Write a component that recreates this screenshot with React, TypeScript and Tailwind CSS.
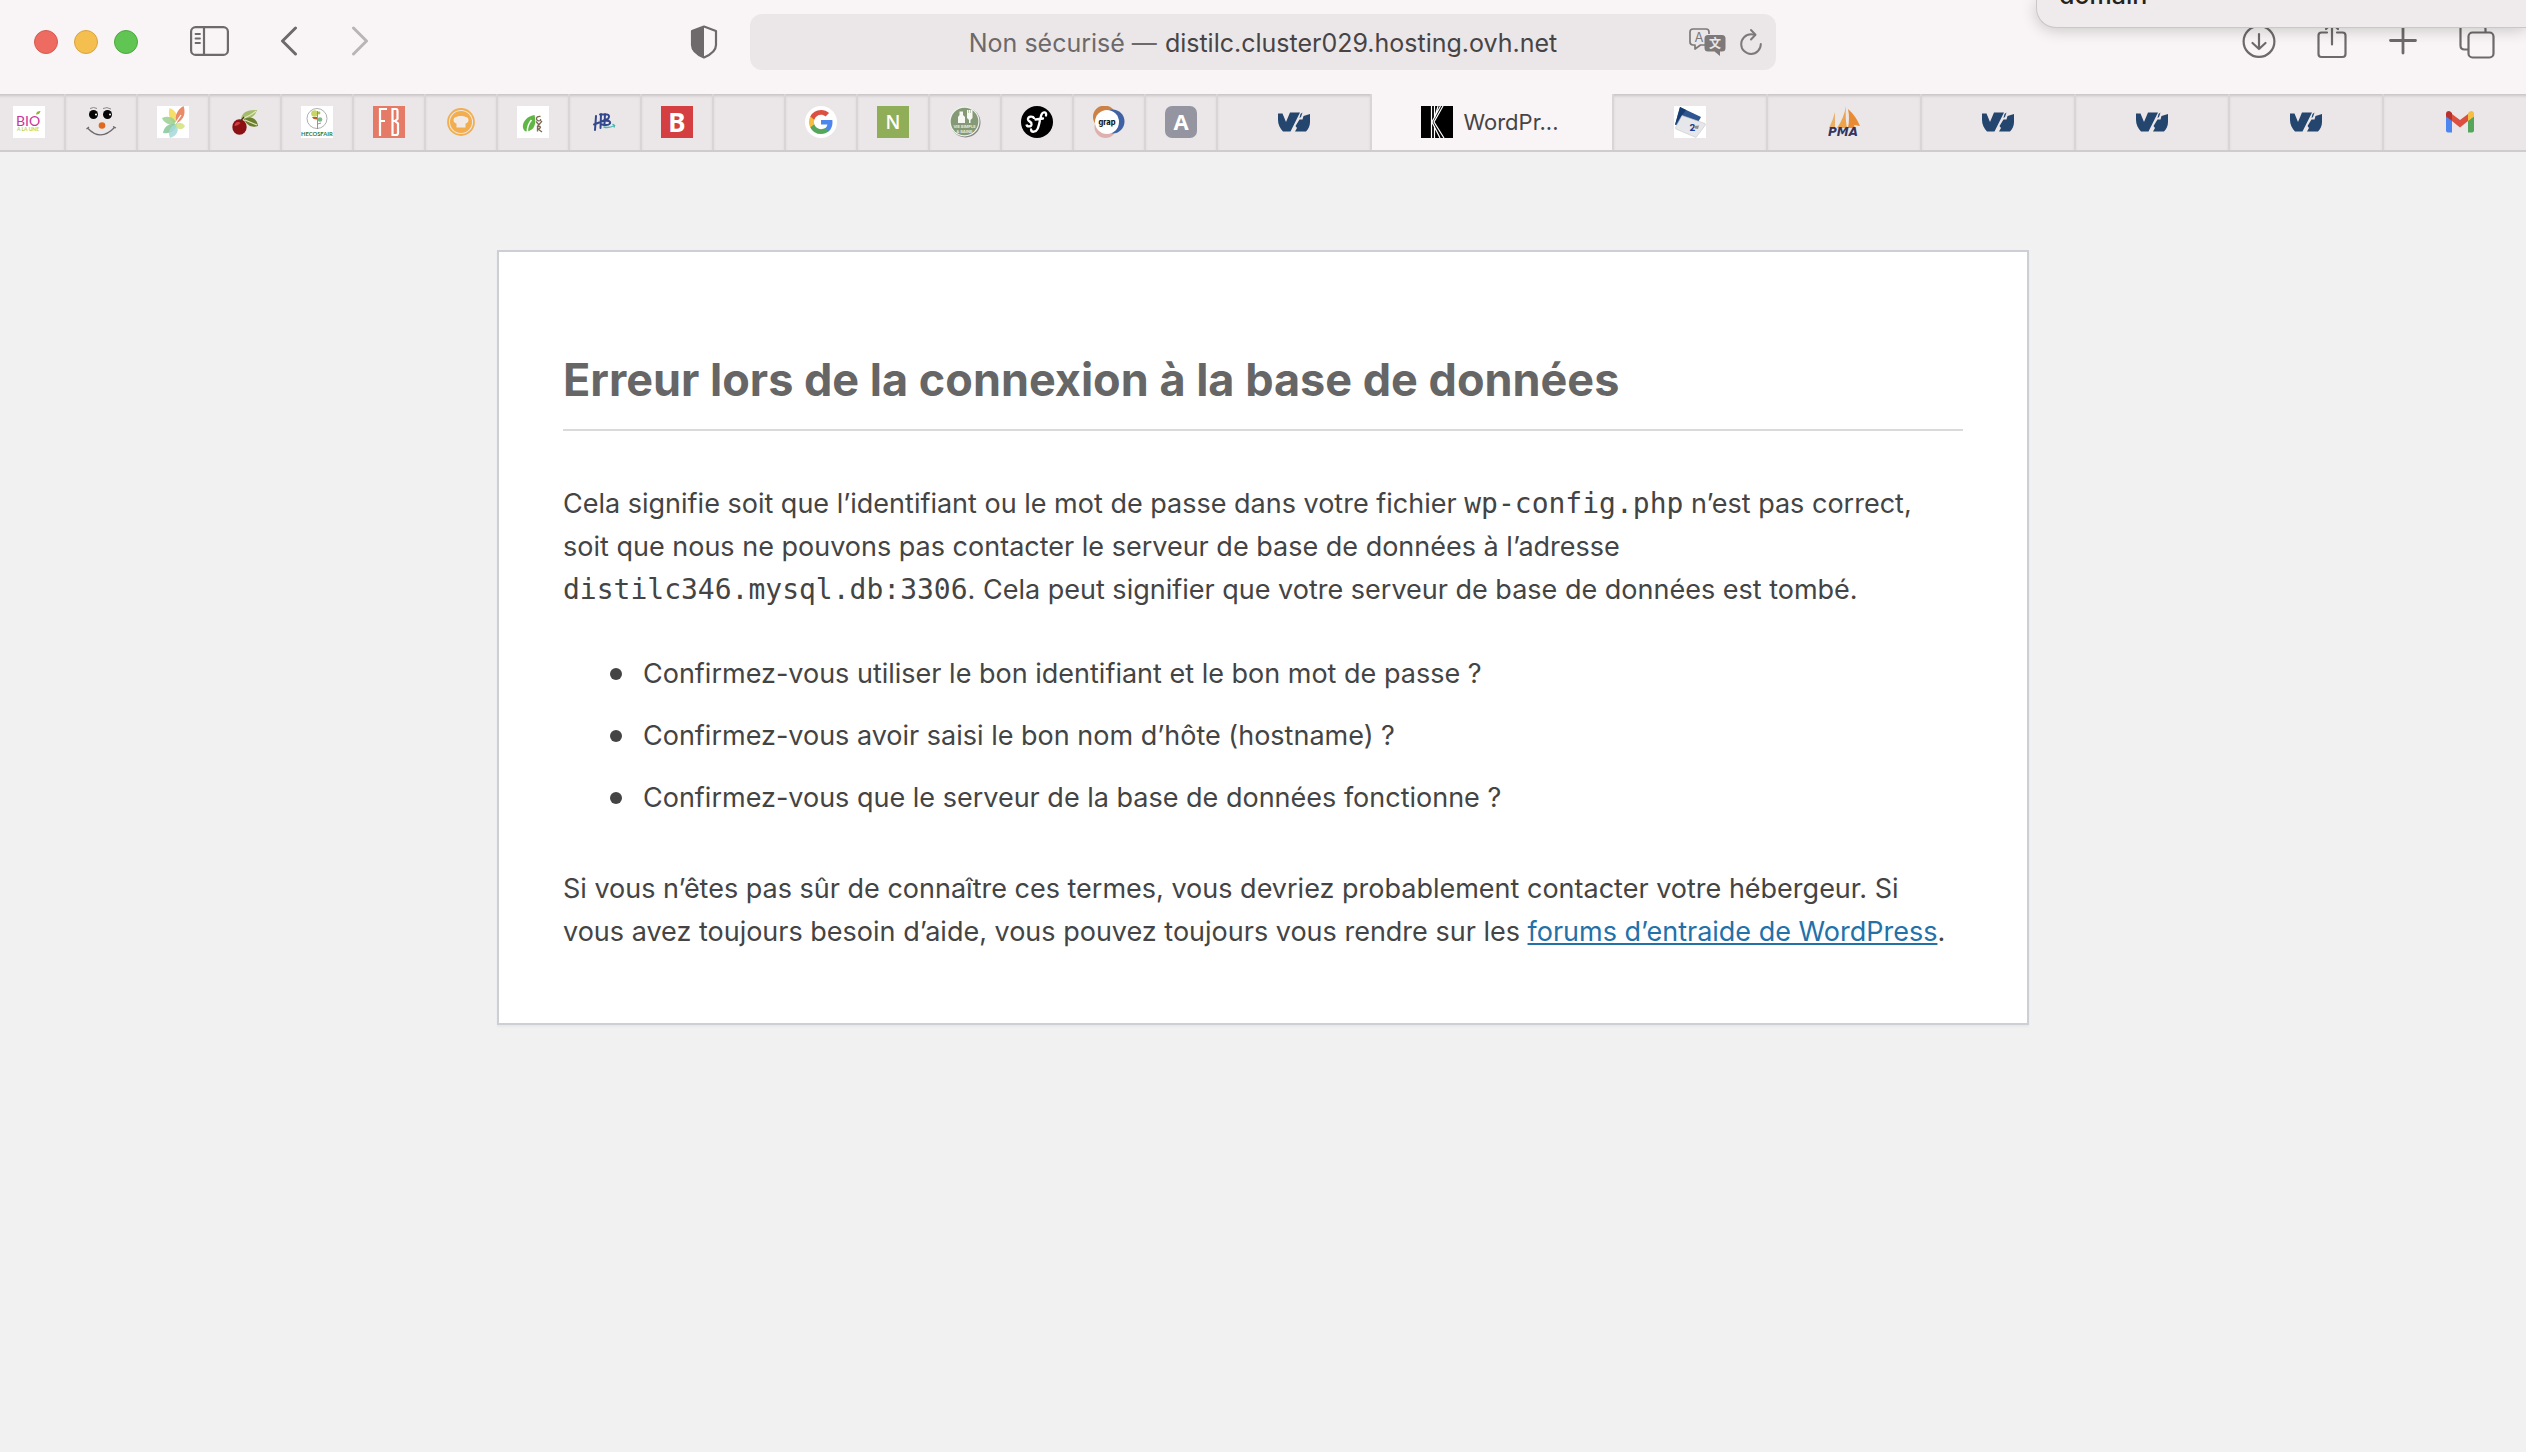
import type { ReactNode } from 'react';

interface Tab {
  id: string;
  label: string;
  icon?: ReactNode;
}

function Favicon({ children }: { children: ReactNode }) {
  return (
    <svg viewBox="0 0 32 32" className="size-8 shrink-0" aria-hidden="true">
      {children}
    </svg>
  );
}

const ovhIcon = (
  <Favicon>
    <path d="M0 7.500 L4.500 7.500 L8 16 L12 6.500 L22 6.500 L12.500 25.500 L5 25.500 C2 22.500 0 18.500 0 14 Z" fill="#24456e" />
    <path d="M22.500 8 L24.500 6.500 L23 11 L21.500 12 Z M25.500 10 L32 8 L32 16 C32 20 30.500 23 28 25.500 L17 25.500 L19 22 L17.500 20 L21.500 13.500 L24.500 13.500 Z" fill="#24456e" />
  </Favicon>
);

const pinnedTabs: Tab[] = [
  {
    id: 'bio',
    label: 'Bio à la une',
    icon: (
      <Favicon>
        <rect width="32" height="32" fill="#fff" />
        <text x="3" y="19.500" fontSize="14" fontFamily="Lato, sans-serif" fill="#c8359b">BIO</text>
        <path d="M23 8.500 C23 6 25 5 27.500 5 C27 7.500 25.500 8.500 23 8.500" fill="#8cb42e" />
        <text x="4" y="25" fontSize="5" fontFamily="Lato, sans-serif" fontWeight="700" fill="#c2cf4c">A LA UNE</text>
      </Favicon>
    ),
  },
  {
    id: 'face',
    label: 'Sourire',
    icon: (
      <Favicon>
        <circle cx="8.500" cy="8.500" r="4.500" fill="#050505" />
        <circle cx="22.500" cy="8.500" r="4.500" fill="#050505" />
        <circle cx="11" cy="8.500" r="1" fill="#fff" />
        <circle cx="25" cy="8.500" r="1" fill="#fff" />
        <path d="M5 2.500 Q8.500 .5 12 2.500 M18 2.500 Q22 .5 26 3" fill="none" stroke="#8a8788" strokeWidth="1" />
        <circle cx="17" cy="19.500" r="3.300" fill="#e0681f" />
        <path d="M2.500 22 Q15.500 36 29.500 21.500 M1.500 23 L4 21 M28 20.500 L31 22" fill="none" stroke="#6c696a" strokeWidth="1.200" />
      </Favicon>
    ),
  },
  {
    id: 'leaves',
    label: 'Feuilles',
    icon: (
      <Favicon>
        <rect width="32" height="32" fill="#fff" />
        <path d="M12.500 2 C20 5 22 11 18 18 C12 14 11 8 12.500 2" fill="#f5df6a" />
        <path d="M26.500 0 C29 7 27 13 20 17 C17 10 20 4 26.500 0" fill="#ea8a68" />
        <path d="M5 12 C12 9 18 12 20 18 C12 20 7 17 5 12" fill="#9bcf92" fillOpacity=".85" />
        <path d="M6 27 C7 20 13 17 20 18 C18 26 12 28 6 27" fill="#86c796" fillOpacity=".85" />
        <path d="M13 32 C10 25 14 20 19 18 C23 24 20 30 13 32" fill="#a5d8da" fillOpacity=".85" />
        <path d="M28 20 C25 25 21 24 18 19 C21 16 25 16 28 20" fill="#d3e07c" fillOpacity=".85" />
        <path d="M18 18 L24 9" stroke="#fff" strokeWidth="1.300" />
      </Favicon>
    ),
  },
  {
    id: 'cherry',
    label: 'Cerise',
    icon: (
      <Favicon>
        <path d="M12 13 C13 6 19 3.500 28 4 C26 11 20 14 12 13.500 Z" fill="#a3bb6b" />
        <path d="M15 13 C21 9.500 28 12 29 20 C23 22 18 20 15 13" fill="#6b7d2e" />
        <path d="M13 12.500 Q20 11 27 5 M16 14 L28 19" stroke="#e0e7bb" strokeWidth="1.200" fill="none" />
        <ellipse cx="10.500" cy="21" rx="7.200" ry="7.800" fill="#8c1113" />
        <path d="M5.500 20 C5.500 16 9.500 15 11.500 17 C9.500 19 7.500 20 5.500 20" fill="#d14040" />
        <path d="M11.500 15 L15 11" stroke="#4d3215" strokeWidth="1.200" />
      </Favicon>
    ),
  },
  {
    id: 'hecosfair',
    label: 'Hecosfair',
    icon: (
      <Favicon>
        <rect width="32" height="32" fill="#fff" />
        <circle cx="16" cy="12.500" r="10" fill="none" stroke="#9a9a9a" strokeWidth=".8" />
        <circle cx="13.500" cy="7.500" r="3.300" fill="#c9d663" />
        <circle cx="19" cy="13.500" r="2.300" fill="#7fb98a" />
        <circle cx="18" cy="7" r="1.400" fill="#a8bf55" />
        <path d="M11 11 L16 11 L16 13.500 Q12 13.500 11 11" fill="#c05a2e" />
        <path d="M16.500 5 V23 M16.500 18 L20 17" stroke="#8f8a7c" strokeWidth=".9" fill="none" />
        <text x="0" y="30" fontSize="5.800" fontFamily="Lato, sans-serif" fontWeight="700" fill="#1f7a4a">HECOSFAIR</text>
      </Favicon>
    ),
  },
  {
    id: 'fb',
    label: 'FB',
    icon: (
      <Favicon>
        <rect width="32" height="32" fill="#e57b66" />
        <path d="M7 30 V3 H14 M7 15 H12" fill="none" stroke="#fff" strokeWidth="2.200" />
        <path d="M19.500 29 V3 H23 Q24.500 3 24.500 5 V13 L22 15 L25 17.500 V27 Q25 29 23 29 Z M19.500 15 H22" fill="none" stroke="#fff" strokeWidth="2.200" />
      </Favicon>
    ),
  },
  {
    id: 'chef',
    label: 'Cuisine',
    icon: (
      <Favicon>
        <circle cx="16" cy="16" r="13" fill="none" stroke="#f2ae4e" strokeWidth="1.800" />
        <circle cx="16" cy="16" r="11" fill="#f2ae4e" />
        <path d="M11.500 21.500 V17.500 C7.500 17 7.500 11 11.500 11 C13 9.800 19 9.800 20.500 11 C24.500 11 24.500 17 20.500 17.500 V21.500 Z" fill="#f1eae6" />
      </Favicon>
    ),
  },
  {
    id: 'gyr',
    label: 'GYR',
    icon: (
      <Favicon>
        <rect width="32" height="32" fill="#fff" />
        <path d="M17.500 9 C19.500 17 18 25 9 25.500 C3 23 5.500 11 17.500 9" fill="#5fb644" />
        <path d="M14.500 14 C11 18 10 21 10.500 26" stroke="#fff" strokeWidth="1.500" fill="none" />
        <path d="M23.500 10.500 Q19.500 10 19.500 13 Q20 15.500 23.500 14.500 V13 M19 15.500 L22 19 M25 15 L20 21 M20.500 25.500 V20.500 H23 Q24.500 22 21 23 L25 26" stroke="#7d6a55" strokeWidth="1.300" fill="none" />
      </Favicon>
    ),
  },
  {
    id: 'hb',
    label: 'HB',
    icon: (
      <Favicon>
        <path d="M7 10 L6 24 M12 8 L11.500 22 M5 18.500 L14 15 M11 8.500 H18 Q21.500 9 19 13 L14 14.500 Q22 14 21 17.500 Q19 20 13 18.500 M16 8 L15.500 18" fill="none" stroke="#33478f" strokeWidth="2" strokeLinecap="round" />
        <path d="M14.500 21 Q20 22.500 25.500 19.500 L23.500 18 M25.500 19.500 L25 21.500" fill="none" stroke="#4bb7b1" strokeWidth="1.300" />
      </Favicon>
    ),
  },
  {
    id: 'b',
    label: 'B',
    icon: (
      <Favicon>
        <rect width="32" height="32" fill="#d44042" />
        <text x="16" y="25.500" fontSize="26" textAnchor="middle" fontFamily="Noto Sans, sans-serif" fontWeight="700" fill="#fff">B</text>
      </Favicon>
    ),
  },
  { id: 'blank', label: 'Onglet vide' },
  {
    id: 'google',
    label: 'Google',
    icon: (
      <Favicon>
        <circle cx="16" cy="16" r="16" fill="#fff" />
        <g transform="translate(4 4)">
          <path d="M23.500 12.270c0-.820-.070-1.600-.2-2.350H12v4.620h6.460a5.530 5.530 0 0 1-2.400 3.630v3h3.870c2.270-2.090 3.570-5.170 3.570-8.900z" fill="#4c86ee" />
          <path d="M12 24c3.240 0 5.960-1.070 7.940-2.910l-3.870-3c-1.080.720-2.450 1.160-4.070 1.160-3.130 0-5.780-2.110-6.730-4.960H1.280v3.100A12 12 0 0 0 12 24z" fill="#55a55b" />
          <path d="M5.270 14.290a7.200 7.200 0 0 1 0-4.580V6.610H1.280a12 12 0 0 0 0 10.780z" fill="#f5bd42" />
          <path d="M12 4.750c1.770 0 3.350.610 4.600 1.800l3.430-3.430C17.950 1.190 15.240 0 12 0A12 12 0 0 0 1.280 6.610l3.990 3.100C6.220 6.860 8.870 4.750 12 4.750z" fill="#db5040" />
        </g>
      </Favicon>
    ),
  },
  {
    id: 'n',
    label: 'N',
    icon: (
      <Favicon>
        <rect width="32" height="32" fill="#90ae58" />
        <text x="16" y="23" fontSize="19" textAnchor="middle" fontFamily="Open Sans, sans-serif" fontWeight="600" fill="#fff">N</text>
      </Favicon>
    ),
  },
  {
    id: 'vie-simple',
    label: 'Vie simple & saine',
    icon: (
      <Favicon>
        <circle cx="16.500" cy="16.500" r="15" fill="#858585" />
        <circle cx="15.500" cy="15.500" r="15" fill="#f3f3ef" />
        <circle cx="15.500" cy="15.500" r="13.800" fill="#849a76" />
        <path d="M10.500 5.500 H14 V9 L16 11 V17 H9 V11 L10.500 9 Z M18 4 H19.500 V7 H20 V4 H21.500 V7 H22 V4 H23.500 V12 L21.500 14 V17 H20 V14 L18 12 Z" fill="#f7f7f3" />
        <text x="15.500" y="22" fontSize="4" textAnchor="middle" fontFamily="Inter, sans-serif" fontWeight="700" fill="#e6e9e0">VIE SIMPLE</text>
        <text x="15.500" y="26.500" fontSize="4" textAnchor="middle" fontFamily="Inter, sans-serif" fontWeight="700" fill="#e6e9e0">& SAINE</text>
      </Favicon>
    ),
  },
  {
    id: 'symfony',
    label: 'Symfony',
    icon: (
      <Favicon>
        <circle cx="16" cy="16" r="16" fill="#000" />
        <path d="M13 13 C13 9.500 6.500 10 7 13.500 C7.500 16 11 15.500 10.500 18.500 C10 21 6 21 5.500 18.500" fill="none" stroke="#fff" strokeWidth="2.400" />
        <path d="M25 9.500 C26 6 22 5 20.500 8.500 C19 12 18.500 19 16.500 23 C15 26 10.500 27 10 23.500 M14.500 13.500 L22 12.500" fill="none" stroke="#fff" strokeWidth="2.300" strokeLinecap="round" />
      </Favicon>
    ),
  },
  {
    id: 'grap',
    label: 'Grap',
    icon: (
      <Favicon>
        <circle cx="11.500" cy="11" r="11.500" fill="#cc8246" />
        <circle cx="12.500" cy="21" r="11" fill="#deb0ae" />
        <circle cx="19.500" cy="15.500" r="12" fill="#3f62a5" />
        <circle cx="14" cy="16" r="12" fill="#fff" />
        <text x="14" y="18.500" fontSize="7.500" textAnchor="middle" fontFamily="Inter, sans-serif" fontWeight="800" fill="#151515">grap</text>
      </Favicon>
    ),
  },
  {
    id: 'a',
    label: 'A',
    icon: (
      <Favicon>
        <rect width="32" height="32" rx="7" fill="#9495a0" />
        <text x="16" y="24" fontSize="22" textAnchor="middle" fontFamily="Open Sans, sans-serif" fontWeight="700" fill="#fff">A</text>
      </Favicon>
    ),
  },
];

const archiveIcon = (
  <Favicon>
    <rect width="32" height="32" fill="#fff" />
    <path d="M6 1 L27 11 L23 18 L1 19 Z" fill="#2f5590" />
    <path d="M6 1 L12 4 L1 19 Z" fill="#173c72" />
    <path d="M8 9.500 L31 17.500 Q32 18 31 19.500 L22 31.500 L2 23 Q1 22 2 20.500 Z" fill="#e6e7ea" stroke="#c5c6ca" strokeWidth=".6" />
    <text x="15.500" y="24.500" fontSize="9" fontFamily="Inter, sans-serif" fontWeight="800" fill="#1c3c8c">2</text>
    <path d="M20 20 L25 19.500 L24 23 L21 22.500 Z" fill="#8d8e93" />
  </Favicon>
);

const pmaIcon = (
  <Favicon>
    <path d="M7 6 V22 H1 Q5 14 7 6" fill="#eab06a" />
    <path d="M18 0 Q17 12 19 22 H9 Q16 12 18 0" fill="#eda24c" />
    <path d="M20 3 Q28 10 32 20 L26 19 L27 22 H20 Q22 12 20 3" fill="#e98b32" />
    <text x="0" y="30" fontSize="12" fontFamily="DejaVu Sans, sans-serif" fontWeight="700" fontStyle="italic" fill="#34345f">PMA</text>
  </Favicon>
);

const gmailIcon = (
  <Favicon>
    <path d="M2 10 L8 14.500 V26.500 H4 Q2 26.500 2 24.500 Z" fill="#4c86ee" />
    <path d="M30 10 L24 14.500 V26.500 H28 Q30 26.500 30 24.500 Z" fill="#55a55b" />
    <path d="M8 8 L16 14 L24 8 V15 L16 21.500 L8 15 Z" fill="#db5040" />
    <path d="M2 8 Q2 5 5 5 Q6 5 8 7 V15 L2 10.500 Z" fill="#b8312c" />
    <path d="M30 8 Q30 5 27 5 Q26 5 24 7 V15 L30 10.500 Z" fill="#f5bd42" />
  </Favicon>
);

const wideTabs: Tab[] = [
  { id: 'archive', label: 'Archive', icon: archiveIcon },
  { id: 'pma', label: 'phpMyAdmin', icon: pmaIcon },
  { id: 'ovh-2', label: 'OVH', icon: ovhIcon },
  { id: 'ovh-3', label: 'OVH', icon: ovhIcon },
  { id: 'ovh-4', label: 'OVH', icon: ovhIcon },
  { id: 'gmail', label: 'Gmail', icon: gmailIcon },
];

const checks = [
  'Confirmez-vous utiliser le bon identifiant et le bon mot de passe ?',
  'Confirmez-vous avoir saisi le bon nom d’hôte (hostname) ?',
  'Confirmez-vous que le serveur de la base de données fonctionne ?',
];

const inactiveTab = 'flex items-center justify-center border-r-2 border-[#d9d5d6] bg-[#ebe7e8] shadow-[inset_0_3px_3px_-1px_#c8c4c5]';

function Toolbar() {
  return (
    <header className="grid h-[94px] grid-cols-[minmax(0,1fr)_minmax(0,1026px)_minmax(0,1fr)] pt-3.5">
      <div className="flex h-14 items-center pr-8 pl-[34px] text-[#6e696a]">
        <div className="flex gap-4">
          <button type="button" aria-label="Fermer" className="size-6 rounded-full border border-[#d65a50] bg-[#ed6b60]" />
          <button type="button" aria-label="Réduire" className="size-6 rounded-full border border-[#d9a33e] bg-[#f5bf4f]" />
          <button type="button" aria-label="Agrandir" className="size-6 rounded-full border border-[#4fa73f] bg-[#61c554]" />
        </div>
        <button type="button" aria-label="Barre latérale" className="ml-[52px]">
          <svg viewBox="0 0 40 32" className="h-8 w-10" fill="none" stroke="currentColor" strokeWidth="2.200">
            <rect x="1.100" y="1.100" width="36.800" height="27.800" rx="4.500" />
            <path d="M14 1 V29" />
            <path d="M5.500 8 H10 M5.500 12.500 H10 M5.500 17 H10" strokeWidth="1.800" strokeLinecap="round" />
          </svg>
        </button>
        <button type="button" aria-label="Précédent" className="ml-[50px]">
          <svg viewBox="0 0 18 32" className="h-8 w-[18px]" fill="none" stroke="currentColor" strokeWidth="3" strokeLinecap="round" strokeLinejoin="round">
            <path d="M15.500 2 L2.500 15 L15.500 28" />
          </svg>
        </button>
        <button type="button" aria-label="Suivant" className="ml-[53px] text-[#b9b5b6]">
          <svg viewBox="0 0 18 32" className="h-8 w-[18px]" fill="none" stroke="currentColor" strokeWidth="3" strokeLinecap="round" strokeLinejoin="round">
            <path d="M2.500 2 L15.500 15 L2.500 28" />
          </svg>
        </button>
        <button type="button" aria-label="Rapport de confidentialité" className="ml-auto">
          <svg viewBox="0 0 28 34" className="h-[34px] w-7">
            <path d="M14 1.500 L26 6 V20 Q26 27.500 14 32.500 Q2 27.500 2 20 V6 Z" fill="none" stroke="currentColor" strokeWidth="2.200" strokeLinejoin="round" />
            <path d="M14 1.500 V32.500 Q2 27.500 2 20 V6 Z" fill="currentColor" />
          </svg>
        </button>
      </div>

      <div className="relative flex h-14 items-center justify-center gap-2 rounded-xl bg-[#ebe7e8] pt-1 text-[25px]">
        <label htmlFor="address" className="text-[#6d696a]">Non sécurisé —</label>
        <input id="address" type="text" defaultValue="distilc.cluster029.hosting.ovh.net" className="field-sizing-content bg-transparent text-[#474445] outline-none" />
        <div className="absolute inset-y-0 right-3.5 flex items-center gap-3.5 text-[#7d797a]">
          <button type="button" aria-label="Traduire">
            <svg viewBox="0 0 38 30" className="h-[30px] w-[38px]">
              <path d="M17 18 H12.500 L7 22 V18 H5 Q2 18 2 15 V5 Q2 2 5 2 H18 Q21 2 21 5 V7" fill="none" stroke="currentColor" strokeWidth="1.700" strokeLinejoin="round" />
              <text x="6.500" y="15" fontSize="13" fontFamily="Inter, sans-serif" fill="currentColor">A</text>
              <path d="M20 8 H34 Q37.500 8 37.500 11.500 V21 Q37.500 24.500 34 24.500 H32 V29 L26.500 24.500 H20 Q16.500 24.500 16.500 21 V11.500 Q16.500 8 20 8 Z" fill="currentColor" />
              <text x="27" y="20.500" fontSize="12" textAnchor="middle" fontFamily="Noto Sans CJK SC, sans-serif" fontWeight="700" fill="#ebe7e8">文</text>
            </svg>
          </button>
          <button type="button" aria-label="Actualiser">
            <svg viewBox="0 0 22 28" className="h-7 w-[22px]" fill="none" stroke="currentColor" strokeWidth="2" strokeLinecap="round" strokeLinejoin="round">
              <path d="M15 6.800 Q13 6.300 11 6.300 A9.800 9.800 0 1 0 20.800 16" />
              <path d="M11 2 L15.500 6.800 L11 11.500" />
            </svg>
          </button>
        </div>
      </div>

      <div className="flex h-14 items-center justify-end pr-[31px] text-[#6e696a]">
        <button type="button" aria-label="Téléchargements">
          <svg viewBox="0 0 34 34" className="size-[34px]" fill="none" stroke="currentColor" strokeWidth="2.200" strokeLinecap="round" strokeLinejoin="round">
            <circle cx="17" cy="16.500" r="15.400" />
            <path d="M17 9 V24 M10.500 18 L17 24 L23.500 18" />
          </svg>
        </button>
        <button type="button" aria-label="Partager" className="ml-[41px]">
          <svg viewBox="0 0 30 42" className="h-[42px] w-[30px]" fill="none" stroke="currentColor" strokeWidth="2.200" strokeLinecap="round" strokeLinejoin="round">
            <path d="M10 11.500 H4.500 Q1.500 11.500 1.500 14.500 V33 Q1.500 36 4.500 36 H25.500 Q28.500 36 28.500 33 V14.500 Q28.500 11.500 25.500 11.500 H20" />
            <path d="M15 23.500 V2 M9 8 L15 2 L21 8" />
          </svg>
        </button>
        <button type="button" aria-label="Nouvel onglet" className="ml-[42px]">
          <svg viewBox="0 0 28 32" className="h-8 w-7" fill="none" stroke="currentColor" strokeWidth="2.800" strokeLinecap="round">
            <path d="M14 1.500 V27 M1.500 14.500 H26.500" />
          </svg>
        </button>
        <button type="button" aria-label="Tous les onglets" className="ml-[42px]">
          <svg viewBox="0 0 36 36" className="size-9" fill="none" stroke="currentColor" strokeWidth="2.200">
            <path d="M9.500 25.500 H5.500 Q1.500 25.500 1.500 21.500 V4 Q1.500 1.500 5 1.500 H22 Q26.500 1.500 26.500 5 V8" />
            <rect x="9.500" y="8.500" width="25" height="25" rx="4" />
          </svg>
        </button>
      </div>
    </header>
  );
}

function TabBar() {
  return (
    <nav aria-label="Onglets" className="overflow-hidden border-b-2 border-[#cfcccd]">
      <div className="-mr-3 -ml-1.5 flex h-14">
        {pinnedTabs.map((tab) => (
          <button key={tab.id} type="button" aria-label={tab.label} className={`${inactiveTab} w-[72px] shrink-0`}>{tab.icon}</button>
        ))}
        <button type="button" aria-label="OVH" className={`${inactiveTab} min-w-0 flex-1`}>{ovhIcon}</button>
        <button type="button" className="flex w-[242px] shrink-0 items-center justify-center gap-2.5 border-r-2 border-[#d9d5d6] pr-1 text-[22px] text-[#474445]">
          <Favicon>
            <rect width="32" height="32" fill="#000" />
            <path d="M10.500 0 V32 M13.500 0 V12 M13.500 20 V32 M17 0 L14 11 M22 0 L13 16 L23 32 M19.500 0 L11 16 L19 32" fill="none" stroke="#fff" strokeWidth="1.200" />
          </Favicon>
          WordPr...
        </button>
        {wideTabs.map((tab) => (
          <button key={tab.id} type="button" aria-label={tab.label} className={`${inactiveTab} min-w-0 flex-1`}>{tab.icon}</button>
        ))}
      </div>
    </nav>
  );
}

export default function App() {
  return (
    <div className="relative min-h-screen overflow-hidden bg-[#f1f1f1] font-['Inter',sans-serif]">
      <div className="bg-[#f9f5f6]">
        <Toolbar />
        <TabBar />
      </div>

      {/* Notification, mostly above the window's top edge */}
      <div className="absolute top-0 right-0 flex h-7 w-[490px] items-end rounded-bl-[20px] border-b border-l border-[#cbc7c8] bg-[#efebec] pb-4 pl-[22px] text-[25px] leading-8 font-medium text-[#222] shadow-[0_2px_16px_rgba(0,0,0,0.2)]">
        domain
      </div>

      <main className="mx-auto mt-[98px] max-w-[1532px] border-2 border-[#ccd0d4] bg-white px-16 pt-[93px] pb-[70px] text-[27px] leading-[43px] text-[#444] shadow-[0_2px_2px_rgba(0,0,0,0.04)]">
        <h1 className="border-b-2 border-[#dadada] pb-3.5 text-[45px] leading-[70px] font-bold text-[#666]">
          Erreur lors de la connexion à la base de données
        </h1>
        <p className="mt-[51px]">
          Cela signifie soit que l’identifiant ou le mot de passe dans votre fichier <code className="font-['DejaVu_Sans_Mono',monospace] text-[28px]">wp-config.php</code> n’est pas correct, soit que nous ne pouvons pas contacter le serveur de base de données à l’adresse <code className="font-['DejaVu_Sans_Mono',monospace] text-[28px]">distilc346.mysql.db:3306</code>. Cela peut signifier que votre serveur de base de données est tombé.
        </p>
        <ul className="mt-[42px] space-y-5 pl-[47px] leading-[42px]">
          {checks.map((check) => (
            <li key={check} className="flex items-center gap-[21px] before:size-3 before:shrink-0 before:rounded-full before:bg-[#444]">{check}</li>
          ))}
        </ul>
        <p className="mt-12">
          Si vous n’êtes pas sûr de connaître ces termes, vous devriez probablement contacter votre hébergeur. Si vous avez toujours besoin d’aide, vous pouvez toujours vous rendre sur les <a href="#forums" className="text-[#2271a9] underline decoration-2 underline-offset-2">forums d’entraide de WordPress</a>.
        </p>
      </main>
    </div>
  );
}
